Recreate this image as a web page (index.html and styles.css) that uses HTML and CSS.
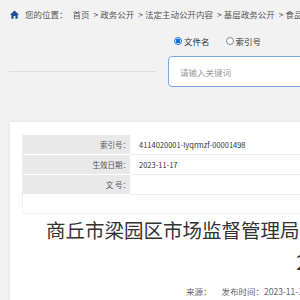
FILE: index.html
```html
<!DOCTYPE html>
<html lang="zh-CN">
<head>
<meta charset="utf-8">
<title>商丘市梁园区市场监督管理局</title>
<link rel="stylesheet" href="styles.css">
</head>
<body>
<div class="page">
  <div class="crumb">
    <svg class="home" viewBox="0 0 10 10" width="9" height="9"><path d="M5 0.6 L0 5.2 H1.5 V9.6 H4 V6.6 H6 V9.6 H8.5 V5.2 H10 Z" fill="#1f4f9e"/></svg>
    <span class="where">您的位置：</span>
    <a class="link home-link">首页</a>
    <span class="sep">&gt;</span><a class="link">政务公开</a>
    <span class="sep">&gt;</span><a class="link">法定主动公开内容</a>
    <span class="sep">&gt;</span><a class="link">基层政务公开</a>
    <span class="sep">&gt;</span><a class="link">食品安全</a>
  </div>

  <div class="searchbar">
    <div class="rule"></div>
    <div class="search">
      <div class="radios">
        <label class="radio"><span class="dot on"></span>文件名</label>
        <label class="radio"><span class="dot"></span>索引号</label>
      </div>
      <div class="input">请输入关键词</div>
    </div>
  </div>

  <div class="card">
    <div class="info">
      <table class="info-table">
        <tr><th>索引号：</th><td>4114020001-lyqrmzf-00001498</td></tr>
        <tr><th>生效日期：</th><td>2023-11-17</td></tr>
        <tr><th>文&nbsp;号：</th><td></td></tr>
      </table>
    </div>
    <h1 class="title">
      <span class="line">商丘市梁园区市场监督管理局关于食品安全监督抽检不合格产品信息通告</span>
      <span class="line">2023年第12期</span>
    </h1>
    <div class="meta">
      <span>来源：</span>
      <span>发布时间：2023-11-17</span>
      <span>浏览次数：</span>
      <span>【字体：大 中 小】</span>
      <span>打印本页</span>
      <span>关闭窗口</span>
    </div>
  </div>
</div>
</body>
</html>
```

FILE: styles.css
```css
html, body {
  margin: 0;
  padding: 0;
  overflow: hidden;
  background: #f2f2f2;
}
body {
  font-family: "Noto Sans CJK SC", "Microsoft YaHei", sans-serif;
  color: #555;
}
.page {
  width: 1200px;
}
.crumb {
  display: flex;
  align-items: center;
  height: 28px;
  padding-left: 10px;
  font-size: 8.5px;
  color: #555;
  white-space: nowrap;
}
.home {
  display: block;
  margin-right: 6px;
}
.where {
  margin-right: 5px;
}
.link {
  color: #555;
}
.sep {
  margin: 0 2px 0 4px;
}
.searchbar {
  display: flex;
  align-items: flex-start;
}
.rule {
  width: 147px;
  height: 1px;
  background: #dcdcdc;
  margin: 43px 0 0 9px;
}
.search {
  margin-left: 12px;
  width: 400px;
}
.radios {
  display: flex;
  align-items: center;
  height: 26px;
  padding-left: 6px;
  font-size: 8.5px;
  color: #333;
}
.radio {
  display: flex;
  align-items: center;
  margin-right: 16px;
}
.dot {
  width: 6px;
  height: 6px;
  border: 1px solid #888;
  border-radius: 50%;
  background: #fff;
  margin-right: 2px;
  box-sizing: content-box;
}
.dot.on {
  border-color: #1a6fe0;
  background: radial-gradient(circle, #1a6fe0 0 2.2px, #fff 2.6px);
}
.input {
  margin-top: 2px;
  height: 29px;
  border: 1px solid #7ea7df;
  border-radius: 4px;
  background: #fff;
  display: flex;
  align-items: center;
  padding-left: 11px;
  font-size: 8.5px;
  color: #999;
}
.card {
  margin: 35px 0 0 10px;
  width: 672px;
  background: #fff;
  box-shadow: 0 0 3px rgba(0, 0, 0, 0.08);
  padding: 13px 12px 40px;
}
.info {
  border: 1px solid #efefef;
  border-top: none;
  padding-bottom: 18px;
}
.info-table {
  width: 100%;
  border-collapse: collapse;
  font-size: 7.5px;
}
.info-table th {
  width: 107px;
  background: #e9e9e9;
  color: #555;
  font-weight: normal;
  text-align: right;
  padding: 0;
  height: 19px;
  border-bottom: 1px solid #fff;
}
.info-table td {
  color: #333;
  padding: 0 0 0 9px;
  border-bottom: 1px solid #eee;
}
.title {
  margin: 0;
  font-weight: normal;
  font-size: 19.5px;
  line-height: 32px;
  color: #333;
  text-align: center;
}
.line {
  display: block;
  white-space: nowrap;
}
.meta {
  margin-top: 6px;
  display: flex;
  justify-content: center;
  gap: 10px;
  font-size: 8.5px;
  line-height: 14px;
  color: #666;
}
```
